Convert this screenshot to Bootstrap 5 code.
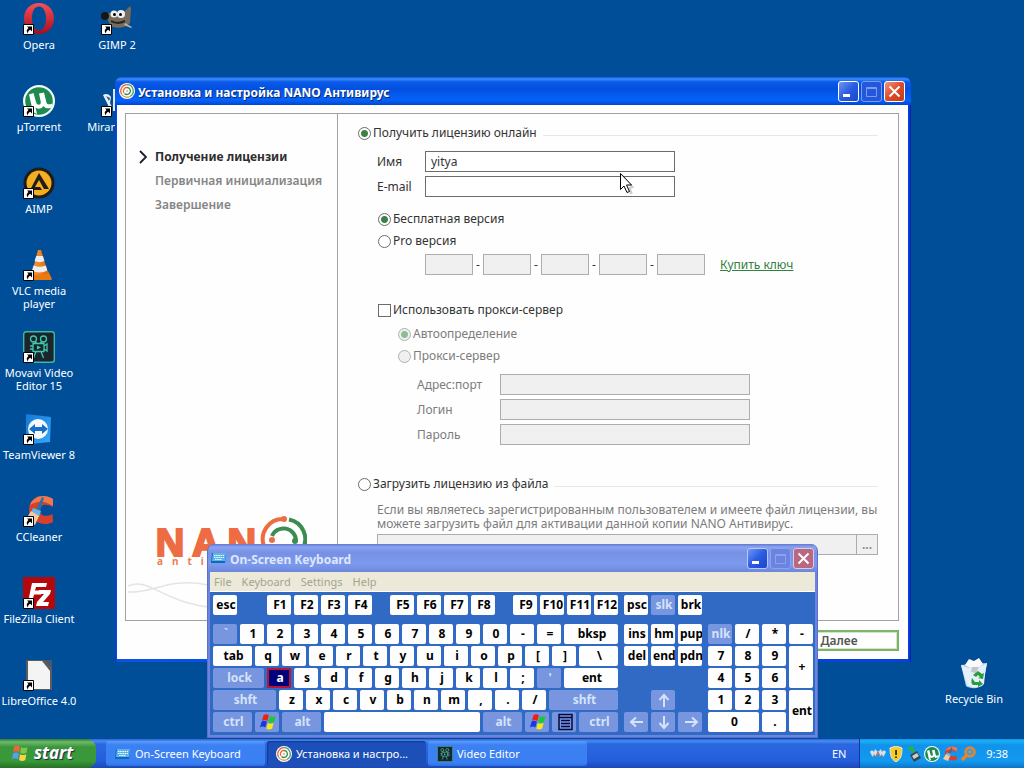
<!DOCTYPE html>
<html lang="ru">
<head>
<meta charset="utf-8">
<meta name="viewport" content="width=device-width, initial-scale=1">
<title>Установка и настройка NANO Антивирус</title>
<link rel="stylesheet" href="https://cdn.jsdelivr.net/npm/bootstrap@5.3.0/dist/css/bootstrap.min.css">
<style>
body { font-family: "Noto Sans", "Open Sans", sans-serif; font-size: 12px; line-height: 14px; background: #004e98; color: #333; }
button { font-family: inherit; }
/* desktop icons */
.shortcut-col { width: 76px; }
.shortcut { height: 82px; width: 76px; color: #fff; text-decoration: none; text-align: center; font-size: 11px; line-height: 13px; white-space: nowrap; }
.shortcut svg { width: 32px; height: 32px; display: block; margin: 0 auto 3px; }
.col-two { left: 79px; top: 3px; }
.col-one { left: 1px; top: 3px; }
.bin { right: 12px; bottom: 0; }
/* windows */
.win { border-radius: 7px 7px 0 0; }
.wizard { left: 115px; right: 113px; top: 77px; background: linear-gradient(90deg, #0831d9, #0a52e6 2px, #0a3fdc calc(100% - 2px), #001ea0); padding: 0 3px 3px 2px; }
.wizard-title { height: 28px; padding: 0 6px 0 4px; margin: 0 -3px 0 -2px; gap: 3px; border-radius: 7px 7px 0 0; background: linear-gradient(#0a5be8, #3c8cf8 2px, #0a5aea 5px, #0250e0 12px, #0463fa 23px, #0246d0 28px); color: #fff; font-weight: 700; font-size: 12px; text-shadow: 1px 1px #0a246a; }
.caps { gap: 2px; }
.cap { width: 21px; height: 21px; border: 1px solid #fff; border-radius: 3px; padding: 0; display: block; }
.cap svg { display: block; width: 19px; height: 19px; }
.cap-blue { background: linear-gradient(135deg, #6f97f5, #2a5be0 50%, #1a48cc); }
.cap-dim { background: #2458dc; border-color: #7d9cf0; }
.cap-red { background: linear-gradient(135deg, #f0987c, #dd4a28 50%, #c8381a); }
.osk .cap-blue { border-color: #b8c8f8; }
.osk .cap-dim { background: #6a84e0; border-color: #8ca2ee; }
.osk .cap-red { background: #b86880; border-color: #e0c8e0; }
.wizard-body { background: #fefefe; padding: 8px 9px 8px 8px; }
.frame-box { border: 1px solid #a0a2a0; }
.side { width: 212px; border-right: 1px solid #a0a2a0; padding: 31px 0 0 13px; }
.step { height: 24px; padding-left: 16px; font-weight: 600; font-size: 12px; color: #858585; white-space: nowrap; }
.step-on { color: #2d2d2d; font-weight: 700; padding-left: 0; }
.step svg { width: 8px; height: 14px; margin-right: 8px; }
.logo { left: 29px; bottom: 52px; }
.logo-word { gap: 8px; color: #ee6c43; font-size: 37px; line-height: 28px; font-weight: 700; -webkit-text-stroke: 2px #ee6c43; height: 28px; margin-bottom: -2px; }
.logo-ring { width: 48px; height: 48px; margin: -14px 0 0 -6px; }
.logo-sub { gap: 9px; color: #ee7c57; font-size: 10px; line-height: 14px; font-weight: 700; padding-left: 2px; }
.form-side { padding: 8px 20px 65px 20px; min-width: 0; }
.line-row { height: 22px; white-space: nowrap; }
.line-row hr { border-color: #e6e8e8; opacity: 1; margin: 4px 0 0 6px; }
.line-row.in-1 { padding-left: 20px; }
.line-row.in-2 { padding-left: 40px; }
.field-row { height: 21px; }
.sp-sm { margin-top: 2px; }
.sp-md { margin-top: 7px; }
.sp-lg { margin-top: 11px; }
.sp-xl { margin-top: 28px; }
.box { height: 21px; border: 1px solid #6c6c6c; border-radius: 0; background: #fff; padding: 0 5px; font-size: 12px; line-height: 14px; color: #333; width: 250px; }
.box:disabled { border-color: #adadad; background: #f0f0f0; }
.box-key { width: 48px; }
.dash { width: 10px; text-align: center; }
.lb { width: 48px; }
.lb-wide { width: 83px; }
.in-1 { padding-left: 19px; }
.in-3 { padding-left: 59px; }
.pick { appearance: none; width: 13px; height: 13px; border: 1px solid #6c6c6c; background: #fff; margin: 0 2px 0 0; flex: none; }
.pick[type=radio] { border-radius: 50%; }
.pick[type=radio]:checked { background: radial-gradient(circle, #3d8149 3px, #fff 4px); }
.pick:disabled { border-color: #b0b0b0; background: #f0f0f0; }
.pick[type=radio]:checked:disabled { background: radial-gradient(circle, #8dbd96 3px, #f0f0f0 4px); }
.dim { color: #7c7c7c; }
.buy { color: #33803f; margin-left: 15px; }
.note { margin: 8px 0 3px; white-space: nowrap; }
.browse { width: 21px; height: 21px; border: 1px solid #adadad; border-left: 0; background: #f0f0f0; color: #8c8c8c; padding: 0; font-weight: 700; font-size: 12px; }
.next { width: 120px; height: 21px; border: 2px solid #7fb26c; background: #fff; box-shadow: inset 0 0 0 1px #cfe8c2; font-weight: 600; color: #555; padding: 0; font-size: 12px; line-height: 14px; margin-top: 9px; }
/* on-screen keyboard */
.osk { left: 207px; bottom: 1px; background: #6b84dd; padding: 0 2px 2px; border: 1px solid #5a70cc; border-top: 0; }
.osk-title { height: 28px; padding: 0 3px; margin: 0 -2px; gap: 3px; border-radius: 7px 7px 0 0; background: linear-gradient(#5f78d4, #8ba3ee 3px, #7690e4 9px, #7b9bee 20px, #6d86dc 28px); color: #dfe6fb; font-weight: 700; font-size: 12px; }
.osk-menu { height: 20px; background: #ece9d8; gap: 10px; padding: 0 4px; border-bottom: 1px solid #fff; }
.osk-menu a { color: #a5a294; text-decoration: none; font-size: 11px; }
.keys { background: #316ac5; padding: 3px 2px 3px 3px; gap: 6px; }
.block { display: grid; gap: 2px 3px; grid-template-rows: 27px; grid-auto-rows: 20px; }
.main-block { width: 405px; }
.nav-block, .num-block { grid-template-columns: repeat(auto-fill, 24px); }
.nav-block { width: 78px; }
.num-block { width: 105px; }
.krow { display: flex; gap: 3px; }
.key { width: 24px; flex: none; height: 20px; border: 0; border-radius: 2px; background: #fefefe; color: #000; font-weight: 700; font-size: 12px; line-height: 20px; padding: 0 0 0 2px; overflow: hidden; white-space: nowrap; text-align: center; }
.k-mod { background: #7796df; color: #d5e2fb; }
.key-on { background: #00007c; color: #fff; border: 2px solid #b81436; line-height: 16px; border-radius: 1px; }
.w39 { width: 39px; } .w51 { width: 51px; } .w63 { width: 63px; } .w156 { width: 156px; }
.w-fill { flex: 1; width: auto; }
.tall { grid-row: span 2; height: 42px; }
.wide { grid-column: span 2; width: 51px; }
.key svg { display: block; margin: 0 auto; width: 20px; height: 18px; }
.ml-27 { margin-left: 27px; } .ml-15 { margin-left: 15px; }
/* taskbar */
.taskbar { height: 29px; background: linear-gradient(#2a5fd8, #4a8cf4 2px, #2a68e0 5px, #245edb 22px, #1a48b8); color: #fff; flex: none; }
.start { width: 96px; border: 0; border-radius: 0 9px 9px 0; padding: 0 0 2px 10px; color: #fff; font: italic 700 17px/24px "Noto Sans", sans-serif; text-shadow: 1px 1px 1px #224; background: linear-gradient(#2f7a2f, #6dba6c 3px, #3b963b 8px, #389a38 22px, #267026); }
.task-list { margin-left: 10px; gap: 2px; }
.task { width: 159px; border: 0; border-radius: 3px; background: linear-gradient(#5b9cfb, #3c81f3 4px, #3a80f2 22px, #2f6fe0); color: #fff; font-size: 11px; padding: 0 9px; text-align: left; height: 25px; margin-top: 2px; white-space: nowrap; }
.task-on { background: #1c4fb8; box-shadow: inset 1px 1px 1px #123a92; }
.task svg, .tray svg { width: 16px; height: 16px; flex: none; }
.lang { width: 40px; font-size: 11px; }
.tray { background: linear-gradient(#1590e8, #18b2f6 2px, #1292ea 6px, #129af0 22px, #0f74c8); border-left: 1px solid #10379c; padding: 0 16px 0 10px; gap: 2px; font-size: 11px; }
.pointer { left: 619px; top: 172px; width: 16px; height: 22px; z-index: 9; }
</style>
</head>
<body class="vh-100 d-flex flex-column overflow-hidden">

<svg width="0" height="0" class="position-absolute" aria-hidden="true">
  <defs>
    <linearGradient id="gRed" x1="0" y1="0" x2="0" y2="1"><stop offset="0" stop-color="#f8505a"/><stop offset="1" stop-color="#a80c1c"/></linearGradient>
    <linearGradient id="gTeam" x1="0" y1="0" x2="1" y2="1"><stop offset="0" stop-color="#1478d8"/><stop offset="1" stop-color="#38a8f8"/></linearGradient>
    <linearGradient id="gCone" x1="0" x2="1"><stop offset="0" stop-color="#f89a3c"/><stop offset="1" stop-color="#e06a08"/></linearGradient>
    <symbol id="arrow" viewBox="0 0 32 32"><path d="M.5 21.500h10v10h-10z" fill="#fff" stroke="#000"/><path d="M4 23.500h5v5l-1.700-1.700c-2 1-2.300 2-2.300 3.700-2-2.300-1.500-4 .5-5.500z" fill="#000"/></symbol>
    <symbol id="nano" viewBox="0 0 16 16"><circle cx="8" cy="8" r="8" fill="#fff"/><g fill="none" stroke-width="1.300"><path d="M2.500 11A6.300 6.300 0 0 1 8 1.700" stroke="#e8683c"/><path d="M8 1.700A6.300 6.300 0 0 1 11 13.500" stroke="#5a9c5c"/><path d="M2.500 11A6.300 6.300 0 0 0 11 13.500" stroke="#d8a050"/><path d="M5 10A3.500 3.500 0 0 1 8 4.500" stroke="#e8683c"/><path d="M8 4.500a3.500 3.500 0 1 1-2.500 6" stroke="#3a8c4c"/></g><circle cx="8" cy="8" r="1.300" fill="#e0c8b0"/></symbol>
    <symbol id="kbd" viewBox="0 0 16 16"><path d="M1 3h14l-1 10H0z" fill="#0f6ab4"/><path d="M2 3h13l-1 8H1z" fill="#58b4ec"/><path d="M3 5.500h10M3 7.500h10M4 9.500h7" stroke="#fff" stroke-dasharray="1.500 .7"/></symbol>
    <symbol id="ut" viewBox="0 0 32 32"><circle cx="16" cy="16" r="16" fill="#f4fff6"/><circle cx="16" cy="16" r="13.800" fill="#1d8a50"/><path d="M6 9.500l4.500-1.500 2.500 9c1 4 5.500 3.500 4.700-.5L16 8.500l5-1 2.300 9.500c.6 2.500 2.200 3 6.200 1.500l-1 4c-3 1.500-6.500 1-8-1.500-2 3-5.500 3.500-8 1.500l1.500 6.500-4-2z" fill="#fff"/></symbol>
    <symbol id="movavi" viewBox="0 0 32 32"><rect x=".7" y=".7" width="30.600" height="30.600" rx="2.500" fill="#1b252e" stroke="#3fb8a0" stroke-width="1.400"/><g fill="none" stroke="#42c8ac" stroke-width="1.300"><circle cx="10.500" cy="8" r="3"/><circle cx="20.500" cy="8" r="3"/><path d="M10 12.500h11v8H10zM21 15l3-2v7l-3-2M7 15h3M7 18h3M13 20.500L10.500 27M18 20.500l2.500 6.500M12 10.500l2 2M19 10.500l-2 2"/></g><path d="M14 14.500l4 2-4 2z" fill="#42c8ac"/></symbol>
    <symbol id="flag" viewBox="0 0 20 20"><path d="M5 2.500c2-1.500 4-1.300 6 0L9.300 8.800c-2-1.300-4-1.500-6 0z" fill="#ee2010"/><path d="M12 3.500c2 1.200 4 1.200 6.500 0L16.700 10c-2 1.200-4.400 1.200-6.400 0z" fill="#18cc30"/><path d="M2.800 9.800c2-1.500 4-1.300 6 0L7 16c-2-1.300-4-1.500-6 0z" fill="#1838e8"/><path d="M9.800 11c2 1.200 4 1.200 6.500 0l-1.800 6.400c-2 1.200-4.400 1.200-6.400 0z" fill="#f8e818"/></symbol>
    <symbol id="flag-start" viewBox="0 0 20 20"><path d="M4 3.500c2-1.300 4-1.200 6 0L9.200 9.300c-2-1.200-4-1.300-6 0z" fill="#e8683c"/><path d="M11 4c2 1.200 4 1.200 6.500 0l-1 5.800c-2 1.200-4.300 1.200-6.300 0z" fill="#7cc84c"/><path d="M3 10.500c2-1.300 4-1.200 6 0l-1 5.800c-2-1.200-4-1.300-6 0z" fill="#5c9cf4"/><path d="M10 11.200c2 1.200 4 1.200 6.300 0l-1 5.800c-2 1.200-4.200 1.200-6.200 0z" fill="#f8d448"/></symbol>
    <symbol id="cc" viewBox="0 0 32 32"><path d="M30 4c-9-6-23-3-24 10-1 11 13 19 24 13l-.5-8c-7 4-13 1-13-4 0-5 7-7 13-3z" fill="#d8402c"/><path d="M30 4c-9-6-20-3-23 6 9-5 15-4 23 1z" fill="#f07850"/><path d="M19 2l2 1-4 13-4-1z" fill="#2c70a8"/><path d="M10 13l8 3-2 6-8-4z" fill="#60b8e8"/><path d="M8 16l8 5-4 9-10-4z" fill="#f4c8a0"/></symbol>
  </defs>
</svg>

<main class="flex-grow-1 position-relative">

  <nav class="col-one shortcut-col position-absolute">
    <a href="#" class="shortcut d-block"><svg viewBox="0 0 32 32"><path fill-rule="evenodd" d="M16 0c9 0 15 7 15 15.500S25 31 16 31 1 24 1 15.500 7 0 16 0zm0 3.500c-5 0-7 5.500-7 12s2.500 12 7 12 7-5.500 7-12-2.500-12-7-12z" fill="url(#gRed)"/><use href="#arrow"/></svg>Opera</a>
    <a href="#" class="shortcut d-block"><svg><use href="#ut"/><use href="#arrow"/></svg>µTorrent</a>
    <a href="#" class="shortcut d-block"><svg viewBox="0 0 32 32"><circle cx="16" cy="16" r="15.500" fill="#201c18"/><circle cx="16" cy="16" r="12.500" fill="#f4ae20"/><path d="M16 6l10 16h-5l-5-9-4 7h5l2 3H7z" fill="#201c18"/><use href="#arrow"/></svg>AIMP</a>
    <a href="#" class="shortcut d-block"><svg viewBox="0 0 32 32"><path d="M7 24l3-2h15l4 8-1 1H3z" fill="#ea7a10"/><path d="M15 1h3l7 23c-4 3-12 3-16 0z" fill="url(#gCone)"/><path d="M13.200 7h6.700l1.500 5c-3 1.500-6.500 1.500-9.800 0zM10.500 16.500c4 1.800 8 1.800 12.300 0l1.600 5c-5 2.500-11 2.500-15.400 0z" fill="#eceef0"/><use href="#arrow"/></svg>VLC media<br>player</a>
    <a href="#" class="shortcut d-block"><svg><use href="#movavi"/><use href="#arrow"/></svg>Movavi Video<br>Editor 15</a>
    <a href="#" class="shortcut d-block"><svg viewBox="0 0 32 32"><path d="M3 1l25 3-1 25-20 2-4-6z" fill="url(#gTeam)"/><circle cx="15" cy="16" r="10" fill="#f6faff"/><path d="M6 16l6-5v3h7v-3l6 5-6 5v-3h-7v3z" fill="#1670c8"/><use href="#arrow"/></svg>TeamViewer 8</a>
    <a href="#" class="shortcut d-block"><svg><use href="#cc"/><use href="#arrow"/></svg>CCleaner</a>
    <a href="#" class="shortcut d-block"><svg viewBox="0 0 32 32"><path d="M0 0h32v32H0z" fill="#b4080c"/><path d="M9 6h15l-1 4H13l-1 3.500h7l-1 4h-7L9 25H5zM16 13h12l-1 4-7 8h6l-1 4H13l1-4 7-8h-6z" fill="#fff"/><use href="#arrow"/></svg>FileZilla Client</a>
    <a href="#" class="shortcut d-block"><svg viewBox="0 0 32 32"><path d="M3 1h19l7 7v23H3z" fill="#5c5c60"/><path d="M5 2h14l8 10v18H5z" fill="#f4f4f4"/><path d="M21 1h8v8z" fill="#46586c"/><use href="#arrow"/></svg>LibreOffice 4.0</a>
  </nav>
  <nav class="col-two shortcut-col position-absolute">
    <a href="#" class="shortcut d-block"><svg viewBox="0 0 32 32"><path d="M4 12c4-3 8-2 10 0 3-3 7-4 10-4l5-5 1 3-1 14c-4 5-14 6-19 3z" fill="#766c5e"/><circle cx="4" cy="13" r="4" fill="#161616"/><circle cx="13" cy="11" r="3.500" fill="#f0f0f0"/><circle cx="20" cy="11" r="4" fill="#f0f0f0"/><circle cx="13.500" cy="11.500" r="1.500"/><circle cx="19.500" cy="11.500" r="1.500"/><path d="M10 18c5 3 10 2 14 0" stroke="#2c2420" stroke-width="2" fill="none"/><path d="M24 20l7 4-1 1-7-3z" fill="#b8b0a0"/><use href="#arrow"/></svg>GIMP 2</a>
    <a href="#" class="shortcut d-block"><svg viewBox="0 0 32 32"><path d="M2 10c3-2 6-1 8 2l-1 6 2 4H8L5 16z" fill="#e8f0f8"/><path d="M5 11l4 2-1 3z" fill="#38506c"/><path d="M12 4h14v22H12z" fill="#dfe8f4"/><use href="#arrow"/></svg>Miranda IM</a>
  </nav>
  <a href="#" class="bin shortcut position-absolute"><svg viewBox="0 0 32 32"><path d="M3 8l26-2-4 22c-4 4-13 4-17 1z" fill="#b8d8f0"/><path d="M3 8c8 5 18 4 26-2l-2 11-1 10c-4 4-13 4-17 1z" fill="#e4f0fa"/><path d="M7 8l4-6 5 2 5-3 4 6-6 5-6-1z" fill="#fafafa"/><path d="M14 10l7 0-3 6-5-1z" fill="#c4c4cc"/><path d="M15 18l5-4 4 3 2-1-1 6-5-1 2-1-2-2-2 2zM14 21l3 4h4v-2l4 4-5 3v-2h-5c-2-1-2-4-1-7z" fill="#2c9c3c"/></svg>Recycle Bin</a>

  <section class="win wizard position-absolute">
    <header class="wizard-title d-flex align-items-center">
      <svg width="16" height="16"><use href="#nano"/></svg>
      <span class="flex-grow-1 pt-1">Установка и настройка NANO Антивирус</span>
      <span class="caps d-flex">
        <button class="cap cap-blue" aria-label="Свернуть"><svg viewBox="0 0 19 19"><path d="M4 12h7v3H4z" fill="#fff"/></svg></button>
        <button class="cap cap-dim" aria-label="Развернуть"><svg viewBox="0 0 19 19"><path d="M4.500 5.500h10v9h-10zM4 6.500h11" fill="none" stroke="#7d9cf0"/></svg></button>
        <button class="cap cap-red" aria-label="Закрыть"><svg viewBox="0 0 19 19"><path d="M4.500 4.500l10 10M14.500 4.500l-10 10" stroke="#fff" stroke-width="2"/></svg></button>
      </span>
    </header>
    <div class="wizard-body">
      <div class="frame-box d-flex">
        <aside class="side position-relative overflow-hidden flex-shrink-0">
          <div class="step step-on d-flex align-items-center"><svg viewBox="0 0 8 14"><path d="M1 1l6 6-6 6" fill="none" stroke="#1c1c30" stroke-width="1.800"/></svg>Получение лицензии</div>
          <div class="step d-flex align-items-center">Первичная инициализация</div>
          <div class="step d-flex align-items-center">Завершение</div>
          <svg class="position-absolute start-0 bottom-0" width="212" height="60" viewBox="0 0 212 60" fill="none" stroke="#e4e4e4" stroke-width="1.500"><path d="M2 32c25 2 40-15 80-7s80 15 130-5M2 26c20-10 35 18 90 22"/></svg>
          <div class="logo position-absolute">
            <div class="logo-word d-flex"><span>N</span><span>A</span><span>N</span>
              <svg class="logo-ring" viewBox="0 0 48 48" fill="none" stroke-width="4"><path d="M5 32A20 20 0 0 1 24 5" stroke="#ee6c43"/><circle cx="25" cy="5" r="3" fill="#ee6c43" stroke="none"/><path d="M30 5.500A20 20 0 0 1 43 36" stroke="#3c8c50"/><path d="M13 22A12.500 12.500 0 0 1 37 27" stroke="#3c8c50"/><circle cx="36" cy="27" r="3" fill="#3c8c50" stroke="none"/><circle cx="13" cy="26" r="3" fill="#ee6c43" stroke="none"/></svg>
            </div>
            <div class="logo-sub d-flex"><span>a</span><span>n</span><span>t</span><span>i</span></div>
          </div>
        </aside>

        <form class="form-side flex-grow-1">
          <div class="line-row d-flex align-items-center"><input class="pick" type="radio" name="src" id="online" checked><label for="online">Получить лицензию онлайн</label><hr class="flex-grow-1"></div>
          <div class="field-row in-1 sp-md d-flex align-items-center"><label class="lb" for="nm">Имя</label><input class="box" id="nm" value="yitya"></div>
          <div class="field-row in-1 mt-1 d-flex align-items-center"><label class="lb" for="em">E-mail</label><input class="box" id="em" type="email"></div>
          <div class="line-row in-1 sp-lg d-flex align-items-center"><input class="pick" type="radio" name="ver" id="free" checked><label for="free">Бесплатная версия</label></div>
          <div class="line-row in-1 d-flex align-items-center"><input class="pick" type="radio" name="ver" id="pro"><label for="pro">Pro версия</label></div>
          <div class="field-row in-1 sp-sm d-flex align-items-center">
            <span class="lb"></span>
            <input class="box box-key" disabled aria-label="Ключ 1"><span class="dash">-</span><input class="box box-key" disabled aria-label="Ключ 2"><span class="dash">-</span><input class="box box-key" disabled aria-label="Ключ 3"><span class="dash">-</span><input class="box box-key" disabled aria-label="Ключ 4"><span class="dash">-</span><input class="box box-key" disabled aria-label="Ключ 5">
            <a class="buy" href="#">Купить ключ</a>
          </div>
          <div class="line-row in-1 mt-4 d-flex align-items-center"><input class="pick" type="checkbox" id="proxy"><label for="proxy">Использовать прокси-сервер</label></div>
          <div class="line-row in-2 sp-sm d-flex align-items-center dim"><input class="pick" type="radio" name="px" id="auto" checked disabled><label for="auto">Автоопределение</label></div>
          <div class="line-row in-2 d-flex align-items-center dim"><input class="pick" type="radio" name="px" id="srv" disabled><label for="srv">Прокси-сервер</label></div>
          <div class="field-row in-3 sp-md d-flex align-items-center dim"><label class="lb-wide" for="ad">Адрес:порт</label><input class="box" id="ad" disabled></div>
          <div class="field-row in-3 mt-1 d-flex align-items-center dim"><label class="lb-wide" for="lg">Логин</label><input class="box" id="lg" disabled></div>
          <div class="field-row in-3 mt-1 d-flex align-items-center dim"><label class="lb-wide" for="pw">Пароль</label><input class="box" id="pw" type="password" disabled></div>
          <div class="line-row sp-xl d-flex align-items-center"><input class="pick" type="radio" name="src" id="file"><label for="file">Загрузить лицензию из файла</label><hr class="flex-grow-1"></div>
          <div class="in-1">
            <p class="note dim">Если вы являетесь зарегистрированным пользователем и имеете файл лицензии, вы<br>можете загрузить файл для активации данной копии NANO Антивирус.</p>
            <div class="d-flex"><input class="box flex-grow-1" disabled aria-label="Файл лицензии"><button type="button" class="browse" disabled>...</button></div>
          </div>
        </form>
      </div>
      <div class="d-flex justify-content-end"><button class="next">Далее</button></div>
    </div>
  </section>

  <section class="win osk position-absolute">
    <header class="osk-title d-flex align-items-center">
      <svg width="16" height="16"><use href="#kbd"/></svg>
      <span class="flex-grow-1 pt-1">On-Screen Keyboard</span>
      <span class="caps d-flex">
        <button class="cap cap-blue" aria-label="Minimize"><svg viewBox="0 0 19 19"><path d="M4 12h7v3H4z" fill="#fff"/></svg></button>
        <button class="cap cap-dim" aria-label="Maximize"><svg viewBox="0 0 19 19"><path d="M4.500 5.500h10v9h-10zM4 6.500h11" fill="none" stroke="#8ca2ee"/></svg></button>
        <button class="cap cap-red" aria-label="Close"><svg viewBox="0 0 19 19"><path d="M4.500 4.500l10 10M14.500 4.500l-10 10" stroke="#fff" stroke-width="2"/></svg></button>
      </span>
    </header>
    <nav class="osk-menu d-flex align-items-center"><a href="#">File</a><a href="#">Keyboard</a><a href="#">Settings</a><a href="#">Help</a></nav>
    <div class="keys d-flex">
      <div class="main-block block">
        <div class="krow"><button class="key">esc</button><button class="key ml-27">F1</button><button class="key">F2</button><button class="key">F3</button><button class="key">F4</button><button class="key ml-15">F5</button><button class="key">F6</button><button class="key">F7</button><button class="key">F8</button><button class="key ml-15">F9</button><button class="key">F10</button><button class="key">F11</button><button class="key">F12</button></div>
        <div class="krow"><button class="key k-mod">`</button><button class="key">1</button><button class="key">2</button><button class="key">3</button><button class="key">4</button><button class="key">5</button><button class="key">6</button><button class="key">7</button><button class="key">8</button><button class="key">9</button><button class="key">0</button><button class="key">-</button><button class="key">=</button><button class="key w-fill">bksp</button></div>
        <div class="krow"><button class="key w39">tab</button><button class="key">q</button><button class="key">w</button><button class="key">e</button><button class="key">r</button><button class="key">t</button><button class="key">y</button><button class="key">u</button><button class="key">i</button><button class="key">o</button><button class="key">p</button><button class="key">[</button><button class="key">]</button><button class="key w-fill">\</button></div>
        <div class="krow"><button class="key k-mod w51">lock</button><button class="key key-on">a</button><button class="key">s</button><button class="key">d</button><button class="key">f</button><button class="key">g</button><button class="key">h</button><button class="key">j</button><button class="key">k</button><button class="key">l</button><button class="key">;</button><button class="key k-mod">'</button><button class="key w-fill">ent</button></div>
        <div class="krow"><button class="key k-mod w63">shft</button><button class="key">z</button><button class="key">x</button><button class="key">c</button><button class="key">v</button><button class="key">b</button><button class="key">n</button><button class="key">m</button><button class="key">,</button><button class="key">.</button><button class="key">/</button><button class="key k-mod w-fill">shft</button></div>
        <div class="krow"><button class="key k-mod w39">ctrl</button><button class="key k-mod" aria-label="win"><svg><use href="#flag"/></svg></button><button class="key k-mod w39">alt</button><button class="key w156" aria-label="space"></button><button class="key k-mod w39">alt</button><button class="key k-mod" aria-label="win"><svg><use href="#flag"/></svg></button><button class="key k-mod" aria-label="menu"><svg viewBox="0 0 20 18"><path d="M4 1.500h13v15H4zM4 4.500h13M6 7.500h9M6 10.500h9M6 13.500h9" fill="none" stroke="#04083c" stroke-width="1.500"/></svg></button><button class="key k-mod w-fill">ctrl</button></div>
      </div>
      <div class="nav-block block">
        <button class="key">psc</button><button class="key k-mod">slk</button><button class="key">brk</button>
        <button class="key">ins</button><button class="key">hm</button><button class="key">pup</button>
        <button class="key">del</button><button class="key">end</button><button class="key">pdn</button>
        <span></span><span></span><span></span>
        <span></span><button class="key k-mod" aria-label="up"><svg viewBox="0 0 20 18"><path d="M10 16V5M5.500 9L10 4l4.500 5" fill="none" stroke="#d5e2fb" stroke-width="2"/></svg></button><span></span>
        <button class="key k-mod" aria-label="left"><svg viewBox="0 0 20 18"><path d="M16 9H5M9 4.500L4 9l5 4.500" fill="none" stroke="#d5e2fb" stroke-width="2"/></svg></button><button class="key k-mod" aria-label="down"><svg viewBox="0 0 20 18"><path d="M10 3v11M5.500 10l4.500 5 4.500-5" fill="none" stroke="#d5e2fb" stroke-width="2"/></svg></button><button class="key k-mod" aria-label="right"><svg viewBox="0 0 20 18"><path d="M4 9h11M11 4.500L16 9l-5 4.500" fill="none" stroke="#d5e2fb" stroke-width="2"/></svg></button>
      </div>
      <div class="num-block block">
        <span></span><span></span><span></span><span></span>
        <button class="key k-mod">nlk</button><button class="key">/</button><button class="key">*</button><button class="key">-</button>
        <button class="key">7</button><button class="key">8</button><button class="key">9</button><button class="key tall">+</button>
        <button class="key">4</button><button class="key">5</button><button class="key">6</button>
        <button class="key">1</button><button class="key">2</button><button class="key">3</button><button class="key tall">ent</button>
        <button class="key wide">0</button><button class="key">.</button>
      </div>
    </div>
  </section>

  <svg class="pointer position-absolute" viewBox="0 0 16 22"><path d="M3.500 4l10 11-3 1 2 5-2 1" fill="none" stroke="#999" stroke-opacity=".5" stroke-width="2"/><path d="M1.500 1.500v16l3.500-3.500 3 6.500 2.500-1-3-6.500h5z" fill="#fff" stroke="#000"/></svg>
</main>

<footer class="taskbar d-flex">
  <button class="start d-flex align-items-center"><svg width="20" height="20" class="me-1"><use href="#flag-start"/></svg>start</button>
  <div class="task-list d-flex flex-grow-1">
    <button class="task d-flex align-items-center gap-1"><svg><use href="#kbd"/></svg>On-Screen Keyboard</button>
    <button class="task task-on d-flex align-items-center gap-1"><svg><use href="#nano"/></svg>Установка и настро...</button>
    <button class="task d-flex align-items-center gap-1"><svg><use href="#movavi"/></svg>Video Editor</button>
  </div>
  <span class="lang d-flex align-items-center justify-content-center">EN</span>
  <div class="tray d-flex align-items-center">
    <svg viewBox="0 0 16 16"><path d="M0 6c1-2 3-2 4 0l1-3 3 3 3-3 1 3c1-2 3-2 4 0-1 2-2 4-3 5l-1-3-2 3-2-4-2 4-2-3-1 3C2 10 1 8 0 6z" fill="#dcdce4"/><path d="M5 12l3-6 3 6" fill="none" stroke="#a8684c"/></svg>
    <svg viewBox="0 0 16 16"><path d="M8 0l6 2c0 7-1 11-6 14C3 13 2 9 2 2z" fill="#f8cc20" stroke="#e8e8e8"/><path d="M7.200 4h1.700v5H7.200zm0 6.500h1.700V12H7.200z" fill="#222"/></svg>
    <svg viewBox="0 0 16 16"><path d="M4 9l7-4 4 7-7 4z" fill="#3c444c"/><path d="M6 10l5-3 2 3-5 3z" fill="#c8d0d8"/><path d="M2 1l6-1-1 2 2 4-3 1-2-4-2 1z" fill="#28b438"/></svg>
    <svg><use href="#ut"/></svg>
    <svg><use href="#cc"/></svg>
    <svg viewBox="0 0 16 16"><circle cx="10" cy="6" r="4.500" fill="#30a0e8" stroke="#ec8424" stroke-width="2.500"/><circle cx="10" cy="6" r="1.500" fill="#ec8424"/><path d="M6.500 9.500L2 14" stroke="#ec8424" stroke-width="3.500"/></svg>
    <span class="ms-2">9:38</span>
  </div>
</footer>
<script src="https://cdn.jsdelivr.net/npm/bootstrap@5.3.0/dist/js/bootstrap.bundle.min.js"></script>
</body>
</html>
